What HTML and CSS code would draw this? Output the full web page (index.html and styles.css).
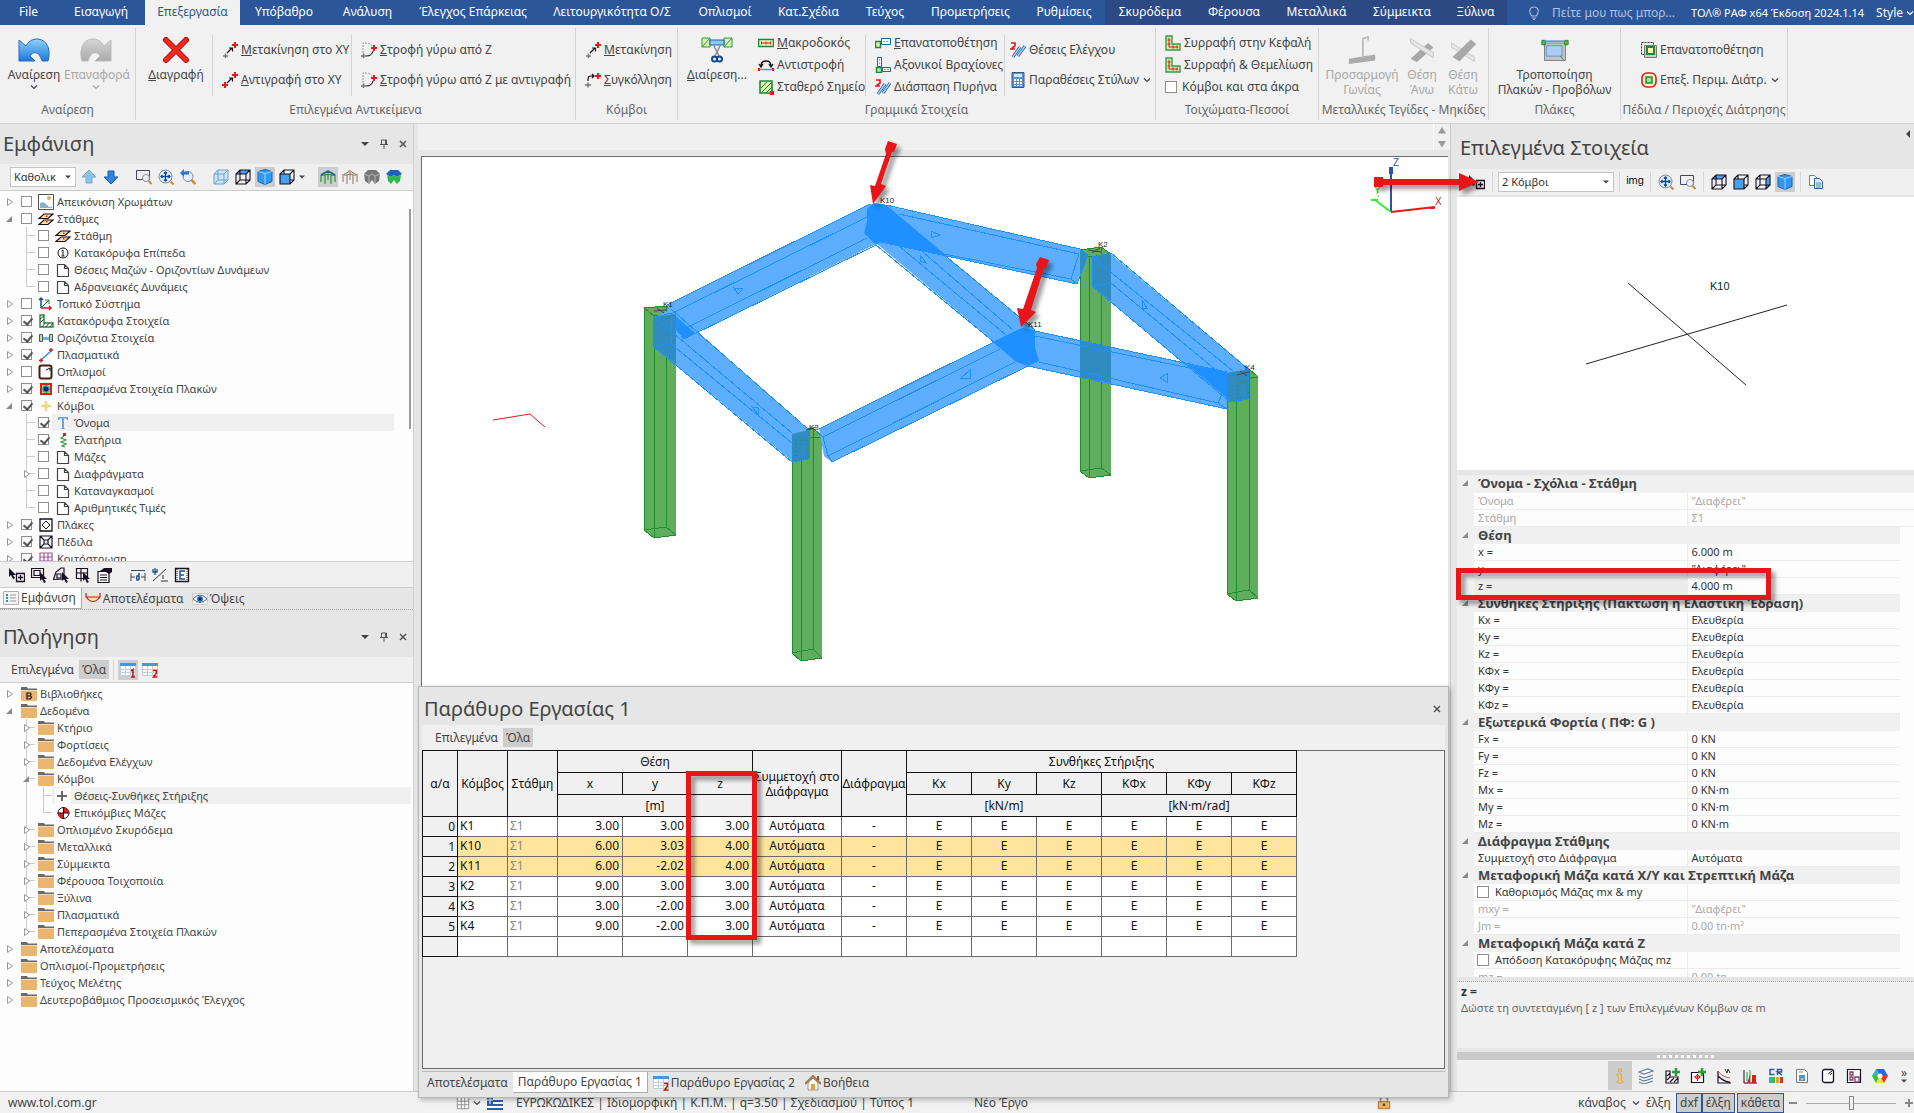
FILE: index.html
```html
<!DOCTYPE html>
<html lang="el">
<head>
<meta charset="utf-8">
<title>ΤΟΛ® ΡΑΦ x64</title>
<link rel="stylesheet" href="styles.css">
</head>
<body>
<svg class="defs" aria-hidden="true">
  <defs>
    <linearGradient id="gb" x1="0" y1="0" x2="0" y2="1"><stop offset="0" stop-color="#8fd0ff"/><stop offset="1" stop-color="#1c7ad8"/></linearGradient>
    <linearGradient id="gg" x1="0" y1="0" x2="0" y2="1"><stop offset="0" stop-color="#d6d6d6"/><stop offset="1" stop-color="#aaa"/></linearGradient>
  </defs>
  <symbol id="undo" viewBox="0 0 32 26"><path d="M1 3v21h16l-5-5c3-5 9-5 12 5h6c3-10 0-21-10-22-6 0-9 2-12 7z" fill="url(#gb)" stroke="#2a6db5"/></symbol>
  <symbol id="redo" viewBox="0 0 32 26"><path d="M31 3v21H15l5-5c-3-5-9-5-12 5H2C-1 14 2 3 12 2c6 0 9 2 12 7z" fill="url(#gg)" stroke="#bbb"/></symbol>
  <symbol id="del" viewBox="0 0 28 28"><path d="M4 4l20 20M24 4L4 24" stroke="#a31510" stroke-width="6" stroke-linecap="round"/><path d="M4 4l20 20M24 4L4 24" stroke="#ee2a1e" stroke-width="4" stroke-linecap="round"/></symbol>
  <symbol id="move" viewBox="0 0 16 16"><path d="M10 3h6M13 0v6" stroke="#e21a1a" stroke-width="2"/><path d="M1 14h5M3.500 11.500v5" stroke="#777" stroke-width="1.500"/><path d="M5 11l5-5M7 6h3.500v3.500" stroke="#201018" fill="none" stroke-width="1.200"/></symbol>
  <symbol id="copyxy" viewBox="0 0 16 16"><path d="M10 3h6M13 0v6M0 13h6M3 10v6" stroke="#e21a1a" stroke-width="2"/><path d="M5 11l5-5M7 6h3.500v3.500" stroke="#201018" fill="none" stroke-width="1.200"/></symbol>
  <symbol id="rot" viewBox="0 0 16 16"><path d="M2 11V1h4q5 1 6 5" stroke="#999" stroke-dasharray="2 1" fill="none"/><path d="M10 6h6M13 3v6" stroke="#e21a1a" stroke-width="2"/><path d="M0 14h5M2.500 11.500v5" stroke="#777" stroke-width="1.500"/><path d="M5 14q6 0 7-5" stroke="#201018" stroke-width="1.200" fill="none"/></symbol>
  <symbol id="glue" viewBox="0 0 16 16"><path d="M10 4h6M13 1v6" stroke="#e21a1a" stroke-width="2"/><path d="M0 13h6M3 10.500v5" stroke="#777" stroke-width="1.500"/><path d="M3 9V7q0-3 3-3h3M7 2l2 2-2 2" stroke="#201018" fill="none" stroke-width="1.200"/></symbol>
  <symbol id="cut" viewBox="0 0 32 26"><path d="M1 1h8v9H1zM23 1h8v9h-8z" fill="#d8f0b0" stroke="#2f9a3c"/><path d="M9 3h14v5H9z" fill="#8cc8f0" stroke="#1c62a8"/><path d="M1 10l8-9M23 10l8-9" stroke="#2f9a3c"/><path d="M13 9l5 10M19 9l-5 10" stroke="#888" stroke-width="1.500"/><circle cx="13.500" cy="22" r="2.500" fill="none" stroke="#15498c" stroke-width="2"/><circle cx="18.500" cy="22" r="2.500" fill="none" stroke="#15498c" stroke-width="2"/></symbol>
  <symbol id="macro" viewBox="0 0 16 16"><path d="M.5 4.500h15v7H.5z" fill="#e4f6c8" stroke="#1f8a35" stroke-width="1.600"/><path d="M3 8h10" stroke="#e21a1a"/><path d="M3 6.500h1v3H3zM7.500 6.500h1v3h-1zM12 6.500h1v3h-1z" fill="#e21a1a"/></symbol>
  <symbol id="inv" viewBox="0 0 16 16"><path d="M3 9q0-5 5-5t5 5M1 7l2 3 2-3M11 7l2 3 2-3" stroke="#201018" fill="none" stroke-width="1.300"/><path d="M2 12.500h12" stroke="#3aa0ff" stroke-width="1.500"/><path d="M0 11h2v3H0zM14 11h2v3h-2z" fill="#e21a1a"/></symbol>
  <symbol id="fixp" viewBox="0 0 16 16"><path d="M2 2h12v12H2z" fill="#d8f0b0" stroke="#1f8a35" stroke-width="1.600"/><path d="M3 9l6-6M3 14L14 3M8 14l6-6" stroke="#1f8a35"/><path d="M12 12h4v4h-4z" fill="#e21a1a"/></symbol>
  <symbol id="repos" viewBox="0 0 16 16"><path d="M.5 6.500h5v6h-5z" fill="#d8f0b0" stroke="#1f8a35" stroke-width="1.500"/><path d="M6.500 3.500h9v6h-9z" fill="#fff" stroke="#1c62a8"/><path d="M8 6.500h6" stroke="#d88" stroke-dasharray="2 1"/></symbol>
  <symbol id="axis" viewBox="0 0 16 16"><path d="M2.500.5h4v9h-4z" fill="#fff" stroke="#1c62a8"/><path d="M7.500 10.500h8v4h-8z" fill="#fff" stroke="#1c62a8"/><path d="M1.500 10.500h5v5h-5z" fill="#b8e8a0" stroke="#1f8a35" stroke-width="1.500"/><path d="M4.500 2v6M9 12.500h6" stroke="#d88" stroke-dasharray="2 1"/></symbol>
  <symbol id="split" viewBox="0 0 16 16"><path d="M1 1h4v3L1 7h4" fill="none" stroke="#e21a1a" stroke-width="1.600"/><path d="M3 15L10 5M8 14l7-10" stroke="#1c4f90" stroke-width="3"/><path d="M3 15L10 5M8 14l7-10" stroke="#9fd4f8" stroke-width="1.500"/></symbol>
  <symbol id="calc" viewBox="0 0 16 16"><path d="M2 .5h12v15H2z" fill="#5a92d0" stroke="#3a587c"/><path d="M4 2h8v3H4z" fill="#d4ecff"/><path d="M4 7h2v2H4zM7 7h2v2H7zM10 7h2v2h-2zM4 10h2v2H4zM7 10h2v2H7zM10 10h2v2h-2zM4 13h2v1H4zM7 13h2v1H7zM10 13h2v1h-2z" fill="#fff"/></symbol>
  <symbol id="wall" viewBox="0 0 16 16"><path d="M1 1h6v8h8v6H1z" fill="#c8ecb0" stroke="#3a9a44" stroke-width="1.400"/><path d="M4 3v9h9M2.500 5h3M2.500 9h3M8 10.500v3M12 10.500v3" fill="none" stroke="#e21a1a"/></symbol>
  <symbol id="steel1" viewBox="0 0 32 32"><path d="M1 26l30-5v7L1 32z" fill="#aaa"/><path d="M17 25V3l6-2v4" fill="none" stroke="#bbb" stroke-width="2"/></symbol>
  <symbol id="steel2" viewBox="0 0 32 32"><path d="M3 26L23 8l6 5L10 30z" fill="#a8a8a8"/><path d="M3 3l26 16v6L3 8z" fill="#e4e4e4" stroke="#c4c4c4"/></symbol>
  <symbol id="steel3" viewBox="0 0 32 32"><path d="M3 8l26 16v5L3 13z" fill="#e4e4e4" stroke="#c4c4c4"/><path d="M4 24L25 4l6 5L12 29z" fill="#a8a8a8"/></symbol>
  <symbol id="slab" viewBox="0 0 32 32"><path d="M4 8h24v20H4z" fill="#c4c4c4" stroke="#777"/><path d="M6 11h18v12H6z" fill="#a9cdf4" stroke="#5f8fc4"/><path d="M1 5h4v5H1zM27 5h4v5h-4z" fill="#5ab65a" stroke="#207a2c"/><path d="M5 6h22" stroke="#4aa0e8" stroke-width="2"/><path d="M22 23l4 4" stroke="#1f8a35"/></symbol>
  <symbol id="foot1" viewBox="0 0 16 16"><path d="M.5.5h12v12H.5z" fill="none" stroke="#333" stroke-dasharray="2 1"/><path d="M3.500 3.500h12v12h-12z" fill="#ccc" stroke="#777"/><path d="M6 5h7v7H6z" fill="#fff6b0" stroke="#1f8a35" stroke-width="2"/></symbol>
  <symbol id="foot2" viewBox="0 0 16 16"><rect x="1" y="1" width="14" height="14" rx="5" fill="#fff6c8" stroke="#e21a1a" stroke-width="1.600"/><path d="M5 5h6v6H5z" fill="#a8e098" stroke="#1f8a35" stroke-width="1.500"/></symbol>
  <symbol id="chev" viewBox="0 0 8 8"><path d="M1 2.500l3 3 3-3" fill="none" stroke="currentColor" stroke-width="1.200"/></symbol>
  <symbol id="tri" viewBox="0 0 8 8"><path d="M0 2h8L4 6z" fill="currentColor"/></symbol>
  <symbol id="tup" viewBox="0 0 8 8"><path d="M0 6.500h8L4 0z" fill="currentColor"/></symbol>
  <symbol id="tdn" viewBox="0 0 8 8"><path d="M0 1h8L4 7.500z" fill="currentColor"/></symbol>
  <symbol id="tleft" viewBox="0 0 8 8"><path d="M6 0v8L2 4z" fill="currentColor"/></symbol>
  <symbol id="pin" viewBox="0 0 10 10"><path d="M2.500 1h5v4.500h-5zM1 5.500h8M5 5.500V10M6.500 1v4.500" fill="none" stroke="#555"/></symbol>
  <symbol id="x" viewBox="0 0 10 10"><path d="M2 2l6 6M8 2L2 8" stroke="#555" stroke-width="1.500"/></symbol>
  <symbol id="exp" viewBox="0 0 10 10"><path d="M2.500 1.500v7L7.500 5z" fill="#fff" stroke="#999"/></symbol>
  <symbol id="col" viewBox="0 0 10 10"><path d="M7 2v6H1z" fill="#8a8a8a"/></symbol>
  <symbol id="up" viewBox="0 0 16 16"><path d="M8 1l7 7h-4v6H5V8H1z" fill="#8cc2ee" stroke="#7aa8d0"/></symbol>
  <symbol id="down" viewBox="0 0 16 16"><path d="M8 15l7-7h-4V2H5v6H1z" fill="#2f84dc" stroke="#1a5ca8"/></symbol>
  <symbol id="zwin" viewBox="0 0 16 16"><path d="M.5 1.500h13v9H.5z" fill="none" stroke="#446"/><circle cx="10" cy="9" r="3.500" fill="#eaf4ff" stroke="#888"/><path d="M12.500 12l3 3" stroke="#d08a3c" stroke-width="2"/></symbol>
  <symbol id="zall" viewBox="0 0 16 16"><path d="M12.500 12.500l3 3" stroke="#d08a3c" stroke-width="2"/><circle cx="7.500" cy="7.500" r="6.500" fill="#dceeff" stroke="#8a8a8a"/><path d="M7.500 3v9M3 7.500h9M6 4.500L7.500 3 9 4.500M6 10.500L7.500 12 9 10.500M4.500 6L3 7.500 4.500 9M10.500 6L12 7.500 10.500 9" fill="none" stroke="#15498c" stroke-width="1.300"/></symbol>
  <symbol id="zprev" viewBox="0 0 16 16"><circle cx="8" cy="7.500" r="5" fill="#dceeff" stroke="#8a8a8a"/><path d="M11.500 11l4 4" stroke="#d08a3c" stroke-width="2.500"/><path d="M0 4l4-4v2.500h5v3H4V8z" fill="#2f74cc"/></symbol>
  <symbol id="c0" viewBox="0 0 16 16"><path d="M1 5l4-4h10v10l-4 4H1z" fill="#cfe6f8"/><path d="M1 5l4-4h10v10l-4 4H1zM1 5h10l4-4M11 5v10M5 1v10L1 15M5 11h10" fill="none" stroke="#6aa0cc"/></symbol>
  <symbol id="c1" viewBox="0 0 16 16"><path d="M1 5l4-4h10l-4 4z" fill="#4aa0f0"/><path d="M1 5l4-4h10v10l-4 4H1zM1 5h10l4-4M11 5v10M5 1v10L1 15M5 11h10" fill="none" stroke="#181020" stroke-width="1.100"/></symbol>
  <symbol id="c2" viewBox="0 0 16 16"><path d="M1 2.500L8 .5l7 2v10l-7 3-7-3z" fill="#2f98f4" stroke="#1c62a8"/><path d="M1 2.500l7 2 7-2M8 4.500v11" fill="none" stroke="#9bd2ff"/></symbol>
  <symbol id="c3" viewBox="0 0 16 16"><path d="M1 5h10v10H1z" fill="#4aa0f0"/><path d="M1 5l4-4h10v10l-4 4H1zM1 5h10l4-4M11 5v10M5 1v4M11 11h4" fill="none" stroke="#181020" stroke-width="1.100"/></symbol>
  <symbol id="c4" viewBox="0 0 16 16"><path d="M11 5l4-4v10l-4 4z" fill="#4aa0f0"/><path d="M1 5l4-4h10v10l-4 4H1zM1 5h10l4-4M11 5v10M5 1v10L1 15M5 11h10" fill="none" stroke="#181020" stroke-width="1.100"/></symbol>
  <symbol id="fr1" viewBox="0 0 16 16"><path d="M1 6l7-4 7 4v7M1 6v7M5 6v9M8 2v9M11 6v9M1 6h4l3-1 3 1h4" fill="none" stroke="#2f9a3c" stroke-width="1.300"/><path d="M1 6l7-4 7 4" fill="none" stroke="#1c62a8" stroke-width="1.500"/></symbol>
  <symbol id="fr2" viewBox="0 0 16 16"><path d="M1 6l7-4 7 4v7M1 6v7M5 6v9M8 2v9M11 6v9M1 6h4l3-1 3 1h4" fill="none" stroke="#8a7060"/><path d="M0 5h2v2H0zM7 1h2v2H7zM14 5h2v2h-2z" fill="#e8a050"/></symbol>
  <symbol id="fr3" viewBox="0 0 16 16"><path d="M0 5l4-4h8l4 4-1 7-4 3-3-4-3 4-4-3z" fill="#777"/><path d="M0 5l5 2 3-2 3 2 5-2M5 7v8M11 7v8" fill="none" stroke="#b4b4b4"/></symbol>
  <symbol id="fr4" viewBox="0 0 16 16"><path d="M0 5l4-4h8l4 4-5 3-3-2-3 2z" fill="#1c62b8"/><path d="M1 6l4 2 3-2 3 2 4-2-1 6-3 3-3-4-3 4-3-3z" fill="#2fb84a"/></symbol>
  <symbol id="pic" viewBox="0 0 16 16"><path d="M.5.500h15v15H.5z" fill="#fff" stroke="#555"/><circle cx="11" cy="4" r="2" fill="#e8a860"/><path d="M2 9q4-2 7 2t5 1v2H2z" fill="#8ab0d0"/></symbol>
  <symbol id="lev" viewBox="0 0 16 16"><path d="M1 13.500h9l5-4.500H6zM1 7.500h9L15 3H6z" fill="#fce0a0" stroke="#181020" stroke-width="1.200"/><path d="M8 10h1.500v1.500H8zM8 4.500h1.500V6H8z" fill="#e21a1a"/></symbol>
  <symbol id="one" viewBox="0 0 16 16"><circle cx="8" cy="8" r="5" fill="#fff" stroke="#181020"/><path d="M6.500 6L8 5v6M6.500 11h3" fill="none" stroke="#181020"/></symbol>
  <symbol id="doc" viewBox="0 0 16 16"><path d="M2.500 2.500h7l4 4v8h-11zM9.500 2.500v4h4" fill="#fff" stroke="#444" stroke-width="1.200"/></symbol>
  <symbol id="loc" viewBox="0 0 16 16"><path d="M3 12V2M1 4l2-2 2 2" fill="none" stroke="#1c4f90" stroke-width="1.500"/><path d="M3 12h10M11 10l2 2-2 2" fill="none" stroke="#e21a1a" stroke-width="1.500"/><path d="M3 12l8-8M7 4h4v4" fill="none" stroke="#1f8a35"/></symbol>
  <symbol id="lwall" viewBox="0 0 16 16"><path d="M2 2h4v8h9v4H2z" fill="#fff" stroke="#1f8a35" stroke-width="1.400"/><path d="M2 6l4-3M2 10l4-4M4 14l3-4M8 14l3-4M12 14l3-4" stroke="#444"/></symbol>
  <symbol id="horz" viewBox="0 0 16 16"><path d="M4 7h8v3H4z" fill="#60b8f0"/><path d="M1.500 4.500h3v7h-3zM11.500 4.500h3v7h-3z" fill="#b8d8a0" stroke="#555"/></symbol>
  <symbol id="plas" viewBox="0 0 16 16"><path d="M3 13L13 4" stroke="#2f84dc" stroke-width="1.300"/><path d="M1 13.500h4M3 11.500v4M11 3h4M13 1v4" stroke="#e21a1a" stroke-width="1.400"/></symbol>
  <symbol id="rein" viewBox="0 0 16 16"><rect x="1.500" y="1.500" width="12" height="13" rx="2" fill="#fff" stroke="#402018" stroke-width="2"/><path d="M8 6l4-2v3" fill="none" stroke="#181020"/></symbol>
  <symbol id="fem" viewBox="0 0 16 16"><path d="M2 2h12v12H2z" fill="#e21a1a"/><path d="M4 4h8v8H4z" fill="#f8e020"/><circle cx="8" cy="8" r="4" fill="#28b8a8"/><circle cx="8" cy="8" r="2.500" fill="#102080"/></symbol>
  <symbol id="plus" viewBox="0 0 16 16"><path d="M8 3v10M3 8h10" stroke="#f2d488" stroke-width="2.500"/></symbol>
  <symbol id="tt" viewBox="0 0 16 16"><path d="M3 2h10v3h-1l-1-1.500H9V13l1.500 1h-5L7 13V3.500H5L4 5H3z" fill="#6ba4da"/></symbol>
  <symbol id="spr" viewBox="0 0 16 16"><path d="M9 4L6 6l5 2-5 2 5 2-4 2 3 1" fill="none" stroke="#2f9a3c" stroke-width="1.200"/><path d="M8 1h3v3H8z" fill="#e21a1a"/></symbol>
  <symbol id="plate" viewBox="0 0 16 16"><path d="M2 2h12v12H2z" fill="#fff" stroke="#181020" stroke-width="1.300"/><path d="M8 4l4 4-4 4-4-4z" fill="none" stroke="#181020"/></symbol>
  <symbol id="foot" viewBox="0 0 16 16"><path d="M2 2h12v12H2zM2 2l4 4M14 2l-4 4M2 14l4-4M14 14l-4-4M6 6h4v4H6z" fill="#fff" stroke="#181020" stroke-width="1.200"/></symbol>
  <symbol id="gridi" viewBox="0 0 16 16"><path d="M2 2h12v12H2zM2 6h12M2 10h12M6 2v12M10 2v12" fill="none" stroke="#9c5c98" stroke-width="1.200"/></symbol>
  <symbol id="arr" viewBox="0 0 16 16"><path d="M0 1v9l2-2 2 4 2-1-2-3h3z" fill="#181020"/><path d="M7.500 6.500h8v8h-8zM9 10.500h5M11.500 8v5" fill="none" stroke="#181020" stroke-width="1.300"/></symbol>
  <symbol id="selr" viewBox="0 0 16 16"><path d="M.5 1.500h12v9H.5zM3 3.500h6v5H3z" fill="none" stroke="#181020" stroke-width="1.200"/><path d="M9 5v9l2-2 2 4 2-1-2-3h3z" fill="#181020"/></symbol>
  <symbol id="selp" viewBox="0 0 16 16"><path d="M.5 12.500L3 5l5-4h3v11zM4 7h4v4H4z" fill="none" stroke="#181020" stroke-width="1.200"/><path d="M9 5v9l2-2 2 4 2-1-2-3h3z" fill="#181020"/></symbol>
  <symbol id="selg" viewBox="0 0 16 16"><path d="M1.500 1.500h11v10h-11zM1.500 6h11M6 1.500v13" fill="none" stroke="#181020" stroke-width="1.200"/><path d="M8 5v9l2-2 2 4 2-1-2-3h3z" fill="#181020"/></symbol>
  <symbol id="prop" viewBox="0 0 16 16"><path d="M1 4.500h11v11H1zM3 8h7M3 10.500h7M3 13h7" fill="#fff" stroke="#181020" stroke-width="1.200"/><path d="M3 4l4-3h8v4l-3 2-3-2z" fill="#181020"/></symbol>
  <symbol id="dim" viewBox="0 0 16 16"><path d="M1 3.500h14M1 6v8M15 6v8M1 10h4M11 10h4" stroke="#445" fill="none"/><path d="M9 6v7M9 9H7q-1 2 0 4h2" stroke="#1c4f90" fill="none" stroke-width="1.500"/></symbol>
  <symbol id="ang" viewBox="0 0 16 16"><path d="M1 14L14 2M9 14h7" stroke="#333"/><path d="M1 2v3h4V2M3 1v7" stroke="#1c4f90" fill="none" stroke-width="1.300"/><path d="M11 8v4" stroke="#333"/></symbol>
  <symbol id="ee" viewBox="0 0 16 16"><path d="M1.500 1.500h13v13h-13z" fill="#fff" stroke="#181020" stroke-width="1.300"/><path d="M3 2v12M13 2v12" stroke="#181020" stroke-dasharray="1 1"/><path d="M11 4H6v8h5M6 8h4" fill="none" stroke="#1c4f90" stroke-width="1.500"/></symbol>
  <symbol id="list" viewBox="0 0 16 16"><path d="M.5 1.500h15v13H.5z" fill="#f4f4f4" stroke="#b0b0b0"/><path d="M3 4h2v2H3zM3 7h2v2H3zM3 10h2v2H3z" fill="#2f84dc"/><path d="M7 5h6M7 8h6M7 11h6" stroke="#999"/></symbol>
  <symbol id="mom" viewBox="0 0 16 16"><path d="M1 6h14q-7 9-14 0z" fill="#fbe9a0"/><path d="M1 2v4h14V2M1 6q7 9 14 0" fill="none" stroke="#c81818" stroke-width="1.200"/></symbol>
  <symbol id="eye" viewBox="0 0 16 16"><path d="M.5 2.500h15v11H.5z" fill="#f4f4f4" stroke="#ccc"/><path d="M1 8q7-8 14 0-7 7-14 0z" fill="#fff" stroke="#4a6a90"/><circle cx="8" cy="8" r="3" fill="#2868b0"/><circle cx="8" cy="8" r="1.200" fill="#102040"/></symbol>
  <symbol id="cal1" viewBox="0 0 16 16"><path d="M.5 1.500h15v12H.5zM.5 7.500h15M.5 10.500h15M5.500 4v9M10.500 4v9" fill="#fff" stroke="#c4ccd4"/><path d="M0 1h16v3H0z" fill="#4a94e4"/><path d="M11 9l2-1.500V15M11 15h4" fill="none" stroke="#c01818" stroke-width="1.600"/></symbol>
  <symbol id="cal2" viewBox="0 0 16 16"><path d="M.5 1.500h15v12H.5zM.5 7.500h15M.5 10.500h15M5.500 4v9M10.500 4v9" fill="#fff" stroke="#c4ccd4"/><path d="M0 1h16v3H0z" fill="#4a94e4"/><path d="M11 8.500h3.500v2.500L11.500 15H15.500" fill="none" stroke="#c01818" stroke-width="1.600"/></symbol>
  <symbol id="fold" viewBox="0 0 16 16"><path d="M0 1h6l1 1.500h9V4H0z" fill="#6a6a6a"/><path d="M0 4.500h16V14q0 1-1 1H1q-1 0-1-1z" fill="#eab56e"/></symbol>
  <symbol id="foldb" viewBox="0 0 16 16"><path d="M0 1h6l1 1.500h9V4H0z" fill="#6a6a6a"/><path d="M0 4.500h16V14q0 1-1 1H1q-1 0-1-1z" fill="#eab56e"/><path d="M6 7h3q2 1 0 3 3 1 0 3H6zM6 10h3" fill="none" stroke="#181020" stroke-width="1.200"/></symbol>
  <symbol id="plusg" viewBox="0 0 16 16"><path d="M0 0h16v16H0z" fill="#fdfdfd"/><path d="M7 3v10M2 8h10" stroke="#666" stroke-width="2"/></symbol>
  <symbol id="mass" viewBox="0 0 16 16"><circle cx="8.500" cy="8" r="5.500" fill="#fff" stroke="#181020"/><path d="M8.500 8V2.500A5.500 5.500 0 0 1 14 8zM8.500 8v5.500A5.500 5.500 0 0 1 3 8z" fill="#e21a1a"/><path d="M8.500 2v12M2.500 8h12" stroke="#181020"/></symbol>
  <symbol id="pages" viewBox="0 0 16 16"><path d="M1.500 1.500h5l3 3v7h-8z" fill="#fff" stroke="#4a84c4"/><path d="M6.500 4.500h5l3 3v7h-8z" fill="#dcecff" stroke="#2a64a4"/><path d="M8 9h5M8 11h5M8 13h5" stroke="#4a84c4"/></symbol>
  <symbol id="house" viewBox="0 0 16 16"><path d="M3 8v7h10V8L8 3z" fill="#fff8e8" stroke="#999"/><path d="M0 9l8-8 8 8" fill="none" stroke="#a07850" stroke-width="2"/><path d="M6 9h4v6H6z" fill="#e0a050"/><path d="M12 1h2v4h-2z" fill="#b04030"/></symbol>
  <symbol id="info" viewBox="0 0 16 16"><path d="M6.500 1h3v3h-3zM5 6h4.500v7H11v2H5v-2h1.500V8H5z" fill="#f4c870" stroke="#c89040" stroke-width=".5"/></symbol>
  <symbol id="lay" viewBox="0 0 16 16"><path d="M1 4l9-3 5 2-9 3zM1 8l5 2 9-3M1 11l5 2 9-3M1 14l5 2 9-3" fill="#fff" stroke="#667a9c" stroke-width="1.200"/></symbol>
  <symbol id="b1" viewBox="0 0 16 16"><path d="M2 3h4v6h8v6H2zM3 8l3-3M3 12l3-3M6 14l4-4M10 14l4-4" fill="#fff" stroke="#181020" stroke-width="1.200"/><path d="M12 0v8M8 4h8" stroke="#2f9a3c" stroke-width="2.500"/></symbol>
  <symbol id="b2" viewBox="0 0 16 16"><path d="M1.500 4.500h12v10h-12z" fill="#fff" stroke="#181020" stroke-width="1.200"/><path d="M4 9h7M7.500 6v7" stroke="#e21a1a"/><circle cx="7.500" cy="9" r="2" fill="none" stroke="#e21a1a"/><path d="M12 0v8M8 4h8" stroke="#2f9a3c" stroke-width="2.500"/></symbol>
  <symbol id="b3" viewBox="0 0 16 16"><path d="M2 3v12h13M2 8q6 6 12 6" fill="none" stroke="#181020" stroke-width="1.200"/><path d="M2 3q4 6 12 7" fill="none" stroke="#c06040"/><path d="M9 1l2 4 1-4 2 4" fill="none" stroke="#333"/></symbol>
  <symbol id="b4" viewBox="0 0 16 16"><path d="M2 2v13h13" fill="none" stroke="#181020"/><path d="M5 15l3-8v8zM10 7h4v8h-4z" fill="#e21a1a"/><path d="M8 2v12M5 4v9" stroke="#2f9a3c"/></symbol>
  <symbol id="b5" viewBox="0 0 16 16"><path d="M6.500 1.500H2v5h4.500M9.500 7V1.500h4v2.500h-4l4.500 3" fill="none" stroke="#3a54a8" stroke-width="1.500"/><path d="M1 9h3v6H1z" fill="#38a8e0"/><path d="M4 9h3v6H4z" fill="#40b848"/><path d="M8 9h3v6H8z" fill="#f0a020"/><path d="M12 9h3v6h-3z" fill="#e03020"/></symbol>
  <symbol id="b6" viewBox="0 0 16 16"><path d="M2.500 1.500h8l3 3v10h-11z" fill="#fff" stroke="#777"/><path d="M5 7h6v6H5z" fill="#4a94e4"/><path d="M5 4h4M6 12l2-3 2 3z" stroke="#888" fill="#fff"/></symbol>
  <symbol id="b7" viewBox="0 0 16 16"><rect x="2.500" y="1.500" width="11" height="13" rx="2" fill="#fff" stroke="#181020" stroke-width="1.300"/><path d="M8 6l4-3M10 7l2-2" stroke="#181020"/></symbol>
  <symbol id="b8" viewBox="0 0 16 16"><path d="M1.500 1.500h13v13h-13z" fill="#fff" stroke="#181020" stroke-width="1.200"/><path d="M4 4h3v3H4zM4 9h3v3H4zM9 9h4v5H9z" fill="none" stroke="#804060" stroke-width="1.300"/></symbol>
  <symbol id="b9" viewBox="0 0 16 16"><path d="M4 1h8l4 7H8z" fill="#2868e0"/><path d="M0 8l4-7 4 7z" fill="#30b8c0"/><path d="M0 8h8l-4 7z" fill="#38c040"/><path d="M4 15l4-7 4 7z" fill="#f0e040"/><path d="M12 15L8 8h8z" fill="#e04020"/><circle cx="8" cy="8" r="2.500" fill="#fff"/></symbol>
  <symbol id="flag" viewBox="0 0 16 16"><path d="M0 1h16v14H0z" fill="#fff"/><path d="M0 2h16M0 6h16M0 10h16M0 14h16" stroke="#2a5ca8" stroke-width="2"/><path d="M0 1h6v8H0z" fill="#2a5ca8"/><path d="M3 1v8M0 5h6" stroke="#fff"/></symbol>
  <symbol id="tbl" viewBox="0 0 16 16"><path d="M1.500 1.500h13v13h-13zM1.500 6h13M1.500 10h13M6 1.500v13M10 1.500v13" fill="#fff" stroke="#888"/></symbol>
  <symbol id="lock" viewBox="0 0 16 16"><path d="M4 8V4q0-3 4-3t4 3v4" fill="none" stroke="#999" stroke-width="2"/><path d="M1.500 6.500h13v8h-13z" fill="#eeb060" stroke="#a06a28"/><circle cx="8" cy="10" r="1.500" fill="#604010"/></symbol>
  <symbol id="bulb" viewBox="0 0 16 16"><path d="M6 11Q3 8 4 4.500 5 2 8 2t4 2.500Q13 8 10 11zM6 13h4M7 14.500h2" fill="none" stroke="#a9b9d6" stroke-width="1.100"/></symbol>
</svg>

<header class="ribbon">
  <nav class="tabs">
    <a href="#">File</a><a href="#">Εισαγωγή</a><a href="#" class="on">Επεξεργασία</a><a href="#">Υπόβαθρο</a><a href="#">Ανάλυση</a><a href="#">Έλεγχος Επάρκειας</a><a href="#">Λειτουργικότητα Ο/Σ</a><a href="#">Οπλισμοί</a><a href="#">Κατ.Σχέδια</a><a href="#">Τεύχος</a><a href="#">Προμετρήσεις</a><a href="#">Ρυθμίσεις</a><a href="#" class="dk">Σκυρόδεμα</a><a href="#" class="dk">Φέρουσα</a><a href="#" class="dk">Μεταλλικά</a><a href="#" class="dk">Σύμμεικτα</a><a href="#" class="dk">Ξύλινα</a>
    <div class="tabs-end"><svg class="i16"><use href="#bulb"/></svg><span class="tell">Πείτε μου πως μπορ...</span><span class="ver">ΤΟΛ® ΡΑΦ x64 Έκδοση 2024.1.14</span><button class="style-btn">Style<svg class="i8"><use href="#chev"/></svg></button></div>
  </nav>
  <div class="groups">
    <section class="grp g1"><div class="body">
      <button class="big w60"><svg><use href="#undo"/></svg>Αναίρεση<svg class="i8"><use href="#chev"/></svg></button>
      <button class="big w64 off"><svg><use href="#redo"/></svg>Επαναφορά<svg class="i8"><use href="#chev"/></svg></button>
    </div><h2>Αναίρεση</h2></section>
    <section class="grp g2"><div class="body">
      <button class="big w72"><svg><use href="#del"/></svg><span><u>Δ</u>ιαγραφή</span></button><i class="vs"></i>
      <div class="stack two w138"><button><svg><use href="#move"/></svg><span><u>Μ</u>ετακίνηση στο XY</span></button><button><svg><use href="#copyxy"/></svg><span><u>Α</u>ντιγραφή στο XY</span></button></div><i class="vs"></i>
      <div class="stack two"><button><svg><use href="#rot"/></svg><span><u>Σ</u>τροφή γύρω από Ζ</span></button><button><svg><use href="#rot"/></svg><span><u>Σ</u>τροφή γύρω από Ζ με αντιγραφή</span></button></div>
    </div><h2>Επιλεγμένα Αντικείμενα</h2></section>
    <section class="grp g3"><div class="body">
      <div class="stack two"><button><svg><use href="#move"/></svg><span><u>Μ</u>ετακίνηση</span></button><button><svg><use href="#glue"/></svg><span><u>Σ</u>υγκόλληση</span></button></div>
    </div><h2>Κόμβοι</h2></section>
    <section class="grp g4"><div class="body">
      <button class="big w64"><svg><use href="#cut"/></svg><span><u>Δ</u>ιαίρεση...</span></button>
      <div class="stack w116"><button><svg><use href="#macro"/></svg><span><u>Μ</u>ακροδοκός</span></button><button><svg><use href="#inv"/></svg><span>Αντιστροφή</span></button><button><svg><use href="#fixp"/></svg><span>Σταθερό Σημείο</span></button></div><i class="vs"></i>
      <div class="stack w138"><button><svg><use href="#repos"/></svg><span><u>Ε</u>πανατοποθέτηση</span></button><button><svg><use href="#axis"/></svg><span>Αξονικοί Βραχίονες</span></button><button><svg><use href="#split"/></svg><span>Διάσπαση Πυρήνα</span></button></div><i class="vs"></i>
      <div class="stack two near"><button><svg><use href="#split"/></svg><span>Θέσεις Ελέγχου</span></button><button><svg><use href="#calc"/></svg><span>Παραθέσεις Στύλων</span><svg class="i8"><use href="#chev"/></svg></button></div>
    </div><h2>Γραμμικά Στοιχεία</h2></section>
    <section class="grp g5"><div class="body">
      <div class="stack"><button><svg><use href="#wall"/></svg><span>Συρραφή στην Κεφαλή</span></button><button><svg><use href="#wall"/></svg><span>Συρραφή &amp; Θεμελίωση</span></button><label><input type="checkbox">Κόμβοι και στα άκρα</label></div>
    </div><h2>Τοιχώματα-Πεσσοί</h2></section>
    <section class="grp g6"><div class="body">
      <button class="big w84 off"><svg><use href="#steel1"/></svg>Προσαρμογή<br>Γωνίας</button>
      <button class="big w36 off"><svg><use href="#steel2"/></svg>Θέση<br>Άνω</button>
      <button class="big w46 off"><svg><use href="#steel3"/></svg>Θέση<br>Κάτω</button>
    </div><h2>Μεταλλικές Τεγίδες - Μηκίδες</h2></section>
    <section class="grp g7"><div class="body">
      <button class="big wide"><svg><use href="#slab"/></svg>Τροποποίηση<br>Πλακών - Προβόλων</button>
    </div><h2>Πλάκες</h2></section>
    <section class="grp g8"><div class="body">
      <div class="stack two"><button><svg><use href="#foot1"/></svg><span>Επανατοποθέτηση</span></button><button><svg><use href="#foot2"/></svg><span>Επεξ. Περιμ. Διάτρ.</span><svg class="i8"><use href="#chev"/></svg></button></div>
    </div><h2>Πέδιλα / Περιοχές Διάτρησης</h2></section>
  </div>
</header>

<main class="work">
  <aside class="left">
    <section class="pane show">
      <header class="cap"><h1>Εμφάνιση</h1><button><svg class="i8"><use href="#tri"/></svg></button><button><svg class="i10"><use href="#pin"/></svg></button><button><svg class="i10"><use href="#x"/></svg></button></header>
      <div class="bar">
        <span class="sel-box s66"><select aria-label="Προβολή"><option>Καθολικ</option></select><svg class="i6"><use href="#tri"/></svg></span>
        <button><svg><use href="#up"/></svg></button><button><svg><use href="#down"/></svg></button>
        <button class="gap"><svg><use href="#zwin"/></svg></button><button><svg><use href="#zall"/></svg></button><button><svg><use href="#zprev"/></svg></button>
        <button class="gap"><svg><use href="#c0"/></svg></button><button><svg><use href="#c1"/></svg></button><button class="act"><svg><use href="#c2"/></svg></button><button><svg><use href="#c3"/></svg></button><svg class="i6"><use href="#tri"/></svg>
        <button class="gap act"><svg><use href="#fr1"/></svg></button><button><svg><use href="#fr2"/></svg></button><button><svg><use href="#fr3"/></svg></button><button><svg><use href="#fr4"/></svg></button>
      </div>
      <div class="treebox">
      <ul class="tree">
        <li><svg class="e"><use href="#exp"/></svg><label><input type="checkbox"><svg><use href="#pic"/></svg>Απεικόνιση Χρωμάτων</label></li>
        <li><svg class="e"><use href="#col"/></svg><label><input type="checkbox"><svg><use href="#lev"/></svg>Στάθμες</label></li>
        <li class="l2"><i class="e"></i><label><input type="checkbox"><svg><use href="#lev"/></svg>Στάθμη</label></li>
        <li class="l2"><i class="e"></i><label><input type="checkbox"><svg><use href="#one"/></svg>Κατακόρυφα Επίπεδα</label></li>
        <li class="l2"><i class="e"></i><label><input type="checkbox"><svg><use href="#doc"/></svg>Θέσεις Μαζών - Οριζοντίων Δυνάμεων</label></li>
        <li class="l2 end"><i class="e"></i><label><input type="checkbox"><svg><use href="#doc"/></svg>Αδρανειακές Δυνάμεις</label></li>
        <li><svg class="e"><use href="#exp"/></svg><label><input type="checkbox"><svg><use href="#loc"/></svg>Τοπικό Σύστημα</label></li>
        <li><svg class="e"><use href="#exp"/></svg><label><input type="checkbox" checked><svg><use href="#lwall"/></svg>Κατακόρυφα Στοιχεία</label></li>
        <li><svg class="e"><use href="#exp"/></svg><label><input type="checkbox" checked><svg><use href="#horz"/></svg>Οριζόντια Στοιχεία</label></li>
        <li><svg class="e"><use href="#exp"/></svg><label><input type="checkbox" checked><svg><use href="#plas"/></svg>Πλασματικά</label></li>
        <li><svg class="e"><use href="#exp"/></svg><label><input type="checkbox"><svg><use href="#rein"/></svg>Οπλισμοί</label></li>
        <li><svg class="e"><use href="#exp"/></svg><label><input type="checkbox" checked><svg><use href="#fem"/></svg>Πεπερασμένα Στοιχεία Πλακών</label></li>
        <li><svg class="e"><use href="#col"/></svg><label><input type="checkbox" checked><svg><use href="#plus"/></svg>Κόμβοι</label></li>
        <li class="l2 hl"><i class="e"></i><label><input type="checkbox" checked><svg><use href="#tt"/></svg>Όνομα</label></li>
        <li class="l2"><i class="e"></i><label><input type="checkbox" checked><svg><use href="#spr"/></svg>Ελατήρια</label></li>
        <li class="l2"><i class="e"></i><label><input type="checkbox"><svg><use href="#doc"/></svg>Μάζες</label></li>
        <li class="l2"><svg class="e"><use href="#exp"/></svg><label><input type="checkbox"><svg><use href="#doc"/></svg>Διαφράγματα</label></li>
        <li class="l2"><i class="e"></i><label><input type="checkbox"><svg><use href="#doc"/></svg>Καταναγκασμοί</label></li>
        <li class="l2 end"><i class="e"></i><label><input type="checkbox"><svg><use href="#doc"/></svg>Αριθμητικές Τιμές</label></li>
        <li><svg class="e"><use href="#exp"/></svg><label><input type="checkbox" checked><svg><use href="#plate"/></svg>Πλάκες</label></li>
        <li><svg class="e"><use href="#exp"/></svg><label><input type="checkbox" checked><svg><use href="#foot"/></svg>Πέδιλα</label></li>
        <li><svg class="e"><use href="#exp"/></svg><label><input type="checkbox" checked><svg><use href="#gridi"/></svg>Κοιτόστρωση</label></li>
      </ul>
      <i class="thumb"></i>
      </div>
      <div class="bar low"><button><svg><use href="#arr"/></svg></button><button><svg><use href="#selr"/></svg></button><button><svg><use href="#selp"/></svg></button><button><svg><use href="#selg"/></svg></button><button><svg><use href="#prop"/></svg></button><button class="gap"><svg><use href="#dim"/></svg></button><button><svg><use href="#ang"/></svg></button><button><svg><use href="#ee"/></svg></button></div>
      <nav class="ptabs"><a href="#" class="on"><svg><use href="#list"/></svg>Εμφάνιση</a><a href="#"><svg><use href="#mom"/></svg>Αποτελέσματα</a><a href="#"><svg><use href="#eye"/></svg>Όψεις</a></nav>
    </section>
    <section class="pane nav">
      <header class="cap"><h1>Πλοήγηση</h1><button><svg class="i8"><use href="#tri"/></svg></button><button><svg class="i10"><use href="#pin"/></svg></button><button><svg class="i10"><use href="#x"/></svg></button></header>
      <div class="bar txt"><button class="t">Επιλεγμένα</button><button class="t act">Όλα</button><i class="vs"></i><button class="act"><svg><use href="#cal1"/></svg></button><button><svg><use href="#cal2"/></svg></button></div>
      <ul class="tree grow">
        <li><svg class="e"><use href="#exp"/></svg><a href="#"><svg><use href="#foldb"/></svg>Βιβλιοθήκες</a></li>
        <li><svg class="e"><use href="#col"/></svg><a href="#"><svg><use href="#fold"/></svg>Δεδομένα</a></li>
        <li class="l2"><svg class="e"><use href="#exp"/></svg><a href="#"><svg><use href="#fold"/></svg>Κτήριο</a></li>
        <li class="l2"><svg class="e"><use href="#exp"/></svg><a href="#"><svg><use href="#fold"/></svg>Φορτίσεις</a></li>
        <li class="l2"><svg class="e"><use href="#exp"/></svg><a href="#"><svg><use href="#fold"/></svg>Δεδομένα Ελέγχων</a></li>
        <li class="l2"><svg class="e"><use href="#col"/></svg><a href="#"><svg><use href="#fold"/></svg>Κόμβοι</a></li>
        <li class="l3 hl"><i class="e"></i><a href="#"><svg><use href="#plusg"/></svg>Θέσεις-Συνθήκες Στήριξης</a></li>
        <li class="l3 end"><i class="e"></i><a href="#"><svg><use href="#mass"/></svg>Επικόμβιες Μάζες</a></li>
        <li class="l2"><svg class="e"><use href="#exp"/></svg><a href="#"><svg><use href="#fold"/></svg>Οπλισμένο Σκυρόδεμα</a></li>
        <li class="l2"><svg class="e"><use href="#exp"/></svg><a href="#"><svg><use href="#fold"/></svg>Μεταλλικά</a></li>
        <li class="l2"><svg class="e"><use href="#exp"/></svg><a href="#"><svg><use href="#fold"/></svg>Σύμμεικτα</a></li>
        <li class="l2"><svg class="e"><use href="#exp"/></svg><a href="#"><svg><use href="#fold"/></svg>Φέρουσα Τοιχοποιία</a></li>
        <li class="l2"><svg class="e"><use href="#exp"/></svg><a href="#"><svg><use href="#fold"/></svg>Ξύλινα</a></li>
        <li class="l2"><svg class="e"><use href="#exp"/></svg><a href="#"><svg><use href="#fold"/></svg>Πλασματικά</a></li>
        <li class="l2 end"><svg class="e"><use href="#exp"/></svg><a href="#"><svg><use href="#fold"/></svg>Πεπερασμένα Στοιχεία Πλακών</a></li>
        <li><svg class="e"><use href="#exp"/></svg><a href="#"><svg><use href="#fold"/></svg>Αποτελέσματα</a></li>
        <li><svg class="e"><use href="#exp"/></svg><a href="#"><svg><use href="#fold"/></svg>Οπλισμοί-Προμετρήσεις</a></li>
        <li><svg class="e"><use href="#exp"/></svg><a href="#"><svg><use href="#fold"/></svg>Τεύχος Μελέτης</a></li>
        <li><svg class="e"><use href="#exp"/></svg><a href="#"><svg><use href="#fold"/></svg>Δευτεροβάθμιος Προσεισμικός Έλεγχος</a></li>
      </ul>
    </section>
  </aside>

  <section class="center">
    <div class="strip"><span class="spin"><svg class="i8"><use href="#tup"/></svg><svg class="i8"><use href="#tdn"/></svg></span></div>
    <div class="view">
      <svg class="scene" viewBox="422 157 1026 934" preserveAspectRatio="xMidYMin meet">
        <g fill="#5eae5e">
          <path d="M644 308l22-2 10 8v221l-22 3-10-8z"/>
          <path d="M792 431l21-3 9 9v221l-21 3-9-8z"/>
          <path d="M1080 250l21-3 10 7v221l-22 3-9-7z"/>
          <path d="M1227 372l22-3 9 8v221l-22 3-9-7z"/>
        </g>
        <g fill="none" stroke="#1f8f2d" shape-rendering="crispEdges">
          <path d="M644 530V308l22-2 10 8M644 308l10 8 22-2M654 316v222M666 306v221l10 8-22 3-10-8 22-3"/>
          <path d="M792 653V431l21-3 9 9M792 431l9 8 21-2M801 439v222M813 428v221l9 9-21 3-9-8 21-4"/>
          <path d="M1080 471V250l21-3 10 7M1080 250l9 7 22-3M1089 257v221M1101 247v221l10 7-22 3-9-7 21-3"/>
          <path d="M1227 594V372l22-3 9 8M1227 372l9 8 22-3M1236 380v221M1249 369v221l9 8-22 3-9-7 22-4"/>
        </g>
        <g fill="#5eaeff">
          <path d="M667 305L870 204 884 205 880 242 684 339 673 329z"/>
          <path d="M653 318L671 309 809 430V459L792 461 653 346z"/>
          <path d="M819 429L1020 329 1035 330 1039 361 1028 366 832 462 824 456z"/>
          <path d="M884 205L1080 249 1088 255 1077 284 881 242z"/>
          <path d="M864 233L876 204H884L1035 330V348L1017 361z"/>
          <path d="M1035 331L1227 372V409L1028 366z"/>
          <path d="M1092 257L1111 254 1248 369 1230 402 1092 286z"/>
        </g>
        <g fill="#1e90ff">
          <path d="M867 209l7-6 12 2 61 51-66-14-5 3-12-12 3-11z"/>
          <path d="M993 342l29-14 13 2v18l4 13-11 5-13-5z"/>
          <path d="M1186 364l41 8v26zM672 313l23 20-11 6-12-14z"/>
        </g>
        <g fill="#308bc0">
          <path d="M653 317l23-3v50l-23-18zM792 434l17-4v29l-17 3zM1080 341l31 6v36l-31-6zM1092 257l19-3v47l-19-15zM1227 373l22-4v30l-19 3-3-4zM1080 250l8 5-8 22z"/>
        </g>
        <g fill="none" stroke="#1e90ff" shape-rendering="crispEdges">
          <path d="M667 305L870 204M684 339L876 245M673 313L867 217M688 327L867 238M695 333l-11 6-9-12"/>
          <path d="M671 309L809 430v29l-17 3-139-116v-28l18-5M654 317L792 433M671 344L792 443M671 313v31l-18 2"/>
          <path d="M819 429L1020 329M832 462L1028 366M823 437L1000 349M828 456L1015 362M817 431l6 6 5 19 4 6"/>
          <path d="M886 205L1080 249l8 6-11 29-196-42M899 214L1079 254l-8 25-137-27M1071 279l6 5"/>
          <path d="M876 245L1017 361M884 205L1035 330M899 246L1006 335M916 246L1013 330"/>
          <path d="M1035 331L1227 372M1028 366L1227 409M1035 336L1228 376M1039 362L1218 403l4-9M1218 403l9 6"/>
          <path d="M1092 257l19-4L1248 369v30l-18 3L1092 286zM1092 257L1233 371M1111 283L1217 371M1111 283l-19 3"/>
          <path d="M734 288l9 1-5 5zM931 231v7l9-3zM920 255l6 8-6-2zM752 407l6 1v6zM961 378l9-8v8zM1160 378l7-4v8zM1142 300l5 8h-5z"/>
        </g>
        <path d="M796 440h12v18h-12zM1238 382h10v16h-10z" fill="none" stroke="#1f8f2d" stroke-dasharray="1 3"/>
        <path d="M654 311l12-1M657 308l7 5M806 430l10-3M1088 250l13 2M1092 253l8-5M1237 375l12-3M1240 371l7 5" stroke="#444" fill="none"/>
        <path d="M493 420l37-6 15 13" stroke="#e81818" fill="none"/>
        <g fill="none" stroke-width="2"><path d="M1391 212V170" stroke="#2a55a4"/><path d="M1391 167v7" stroke="#2a55a4" stroke-width="4"/><path d="M1391 212l-16-12M1371 200h7" stroke="#30f030"/><path d="M1378 197v-9" stroke="#30f030" stroke-width="1" stroke-dasharray="2 2"/><path d="M1391 212l44-5M1430 208h5" stroke="#e81818"/></g>
        <g class="klab"><text x="663" y="307">K1</text><text x="880" y="203">K10</text><text x="809" y="430">K3</text><text x="1098" y="247">K2</text><text x="1028" y="327">K11</text><text x="1245" y="370">K4</text></g>
        <g class="alab"><text x="1393" y="166" fill="#2a55a4">Z</text><text x="1374" y="194" fill="#30c030">Y</text><text x="1435" y="205" fill="#c02020">X</text></g>
      </svg>
    </div>

    <section class="win">
      <header class="cap"><h1>Παράθυρο Εργασίας 1</h1><button><svg class="i10"><use href="#x"/></svg></button></header>
      <div class="bar txt"><button class="t">Επιλεγμένα</button><button class="t act">Όλα</button></div>
      <div class="sheet">
        <table>
          <colgroup><col class="c35"><col class="c50"><col class="c50"><col class="c65"><col class="c65"><col class="c65"><col class="c89"><col class="c65"><col class="c65"><col class="c65"><col class="c65"><col class="c65"><col class="c65"><col class="c65"></colgroup>
          <thead>
            <tr><th rowspan="3">α/α</th><th rowspan="3">Κόμβος</th><th rowspan="3">Στάθμη</th><th colspan="3">Θέση</th><th rowspan="3">Συμμετοχή στο Διάφραγμα</th><th rowspan="3">Διάφραγμα</th><th colspan="6">Συνθήκες Στήριξης</th></tr>
            <tr><th>x</th><th>y</th><th>z</th><th>Kx</th><th>Ky</th><th>Kz</th><th>KΦx</th><th>KΦy</th><th>KΦz</th></tr>
            <tr><th colspan="3">[m]</th><th colspan="3">[kN/m]</th><th colspan="3">[kN·m/rad]</th></tr>
          </thead>
          <tbody>
            <tr><th>0</th><td class="l">K1</td><td class="l g">Σ1</td><td class="r">3.00</td><td class="r">3.00</td><td class="r">3.00</td><td>Αυτόματα</td><td>-</td><td>E</td><td>E</td><td>E</td><td>E</td><td>E</td><td>E</td></tr>
            <tr class="y"><th>1</th><td class="l">K10</td><td class="l g">Σ1</td><td class="r">6.00</td><td class="r">3.03</td><td class="r">4.00</td><td>Αυτόματα</td><td>-</td><td>E</td><td>E</td><td>E</td><td>E</td><td>E</td><td>E</td></tr>
            <tr class="y"><th>2</th><td class="l">K11</td><td class="l g">Σ1</td><td class="r">6.00</td><td class="r">-2.02</td><td class="r">4.00</td><td>Αυτόματα</td><td>-</td><td>E</td><td>E</td><td>E</td><td>E</td><td>E</td><td>E</td></tr>
            <tr><th>3</th><td class="l">K2</td><td class="l g">Σ1</td><td class="r">9.00</td><td class="r">3.00</td><td class="r">3.00</td><td>Αυτόματα</td><td>-</td><td>E</td><td>E</td><td>E</td><td>E</td><td>E</td><td>E</td></tr>
            <tr><th>4</th><td class="l">K3</td><td class="l g">Σ1</td><td class="r">3.00</td><td class="r">-2.00</td><td class="r">3.00</td><td>Αυτόματα</td><td>-</td><td>E</td><td>E</td><td>E</td><td>E</td><td>E</td><td>E</td></tr>
            <tr><th>5</th><td class="l">K4</td><td class="l g">Σ1</td><td class="r">9.00</td><td class="r">-2.00</td><td class="r">3.00</td><td>Αυτόματα</td><td>-</td><td>E</td><td>E</td><td>E</td><td>E</td><td>E</td><td>E</td></tr>
            <tr><th></th><td></td><td></td><td></td><td></td><td></td><td></td><td></td><td></td><td></td><td></td><td></td><td></td><td></td></tr>
          </tbody>
        </table>
      </div>
      <nav class="ptabs"><a href="#">Αποτελέσματα</a><a href="#" class="on">Παράθυρο Εργασίας 1</a><a href="#"><svg><use href="#cal2"/></svg>Παράθυρο Εργασίας 2</a><a href="#"><svg><use href="#house"/></svg>Βοήθεια</a></nav>
    </section>
  </section>

  <aside class="right">
    <header class="cap"><h1>Επιλεγμένα Στοιχεία</h1><button><svg class="i8"><use href="#tleft"/></svg></button></header>
    <div class="bar">
      <button><svg><use href="#arr"/></svg></button><i class="vs"></i>
      <span class="sel-box s116"><select aria-label="Επιλογή"><option>2 Κόμβοι</option></select><svg class="i6"><use href="#tri"/></svg></span><i class="vs"></i>
      <button class="img">img</button><i class="vs"></i>
      <button><svg><use href="#zall"/></svg></button><button><svg><use href="#zwin"/></svg></button><i class="vs"></i>
      <button><svg><use href="#c1"/></svg></button><button><svg><use href="#c3"/></svg></button><button><svg><use href="#c4"/></svg></button><button class="act"><svg><use href="#c2"/></svg></button><i class="vs"></i>
      <button><svg><use href="#pages"/></svg></button>
    </div>
    <div class="preview"><svg viewBox="1457 197 457 273"><path d="M1628 283l118 102M1586 364l201-59" stroke="#222" fill="none"/><text x="1710" y="290">K10</text></svg></div>
    <div class="props">
      <table class="full">
        <colgroup><col class="k17"><col class="k213"><col></colgroup>
        <tr class="h"><td><svg class="e"><use href="#col"/></svg></td><th colspan="2">Όνομα - Σχόλια - Στάθμη</th></tr>
        <tr class="d"><td></td><td>Όνομα</td><td>"Διαφέρει"</td></tr>
        <tr class="d"><td></td><td>Στάθμη</td><td>Σ1</td></tr>
      </table>
      <table>
        <colgroup><col class="k17"><col class="k213"><col></colgroup>
        <tr class="h"><td><svg class="e"><use href="#col"/></svg></td><th colspan="2">Θέση</th></tr>
        <tr><td></td><td>x =</td><td>6.000 m</td></tr>
        <tr><td></td><td>y =</td><td>"Διαφέρει"</td></tr>
        <tr class="cur"><td></td><td>z =</td><td>4.000 m</td></tr>
        <tr class="h"><td><svg class="e"><use href="#col"/></svg></td><th colspan="2">Συνθήκες Στήριξης (Πάκτωση ή Ελαστική Έδραση)</th></tr>
        <tr><td></td><td>Kx =</td><td>Ελευθερία</td></tr>
        <tr><td></td><td>Ky =</td><td>Ελευθερία</td></tr>
        <tr><td></td><td>Kz =</td><td>Ελευθερία</td></tr>
        <tr><td></td><td>KΦx =</td><td>Ελευθερία</td></tr>
        <tr><td></td><td>KΦy =</td><td>Ελευθερία</td></tr>
        <tr><td></td><td>KΦz =</td><td>Ελευθερία</td></tr>
        <tr class="h"><td><svg class="e"><use href="#col"/></svg></td><th colspan="2">Εξωτερικά Φορτία ( ΠΦ: G )</th></tr>
        <tr><td></td><td>Fx =</td><td>0 KN</td></tr>
        <tr><td></td><td>Fy =</td><td>0 KN</td></tr>
        <tr><td></td><td>Fz =</td><td>0 KN</td></tr>
        <tr><td></td><td>Mx =</td><td>0 KN·m</td></tr>
        <tr><td></td><td>My =</td><td>0 KN·m</td></tr>
        <tr><td></td><td>Mz =</td><td>0 KN·m</td></tr>
        <tr class="h"><td><svg class="e"><use href="#col"/></svg></td><th colspan="2">Διάφραγμα Στάθμης</th></tr>
        <tr><td></td><td>Συμμετοχή στο Διάφραγμα</td><td>Αυτόματα</td></tr>
        <tr class="h"><td><svg class="e"><use href="#col"/></svg></td><th colspan="2">Μεταφορική Μάζα κατά X/Y και Στρεπτική Μάζα</th></tr>
        <tr><td></td><td><label><input type="checkbox">Καθορισμός Μάζας mx &amp; my</label></td><td></td></tr>
        <tr class="d"><td></td><td>mxy =</td><td>"Διαφέρει"</td></tr>
        <tr class="d"><td></td><td>Jm =</td><td>0.00 tn·m²</td></tr>
        <tr class="h"><td><svg class="e"><use href="#col"/></svg></td><th colspan="2">Μεταφορική Μάζα κατά Z</th></tr>
        <tr><td></td><td><label><input type="checkbox">Απόδοση Κατακόρυφης Μάζας mz</label></td><td></td></tr>
        <tr class="d"><td></td><td>mz =</td><td>0.00 tn</td></tr>
      </table>
    </div>
    <div class="hint"><b>z =</b><p>Δώστε τη συντεταγμένη [ z ] των Επιλεγμένων Κόμβων σε m</p></div>
    <div class="grip"><i></i></div>
    <div class="bar icons"><button class="act"><svg><use href="#info"/></svg></button><button><svg><use href="#lay"/></svg></button><button><svg><use href="#b1"/></svg></button><button><svg><use href="#b2"/></svg></button><button><svg><use href="#b3"/></svg></button><button><svg><use href="#b4"/></svg></button><button><svg><use href="#b5"/></svg></button><button><svg><use href="#b6"/></svg></button><button><svg><use href="#b7"/></svg></button><button><svg><use href="#b8"/></svg></button><button><svg><use href="#b9"/></svg></button><button class="more">»<svg class="i6"><use href="#tri"/></svg></button></div>
  </aside>
</main>

<footer class="status">
  <span class="site">www.tol.com.gr</span>
  <span class="info"><svg class="i14"><use href="#tbl"/></svg><svg class="i8"><use href="#chev"/></svg><svg class="i16"><use href="#flag"/></svg><span class="code">ΕΥΡΩΚΩΔΙΚΕΣ | Ιδιομορφική | Κ.Π.Μ. | q=3.50 | Σχεδιασμού | Τύπος 1</span></span>
  <span class="proj">Νέο Έργο</span>
  <svg class="i14"><use href="#lock"/></svg>
  <span class="snap"><span>κάναβος</span><svg class="i8"><use href="#chev"/></svg><span>έλξη</span></span>
  <span class="tog"><button>dxf</button><button>έλξη</button><button>κάθετα</button></span>
  <span class="zoom"><svg class="i10"><path d="M1 5h8" stroke="#888" stroke-width="2"/></svg><input type="range" aria-label="Ζουμ"><svg class="i10"><path d="M1 5h8M5 1v8" stroke="#888" stroke-width="2"/></svg></span>
</footer>

<svg class="notes" viewBox="0 0 1914 1113" preserveAspectRatio="xMidYMin meet" aria-hidden="true">
  <g fill="#e81519">
    <path d="M888 141l9 3-3 8h-2l-11 32 5 2-13 18-3-19 5 1 11-32-1-5z"/>
    <path d="M1040 257l9 3-3 8h-2l-13 42 5 2-15 15-4-19 6 1 14-41-1-4z"/>
    <path d="M1374 177h9v2h76v-6l20 9-20 9v-6h-76v2h-9z"/>
  </g>
  <g fill="none" stroke="#e81519" stroke-width="5"><path d="M688.500 773.500h66v164h-66zM1458.500 570.500h310v27h-310z"/></g>
</svg>
</body>
</html>
```
FILE: styles.css
```css
* { box-sizing: border-box; }
body { margin: 0; height: 100vh; display: grid; grid-template-columns: minmax(0, 1fr); grid-template-rows: auto minmax(0, 1fr) 22px; background: #e6e6e6; color: #444; font: 12px/16px "Noto Sans", "Open Sans", sans-serif; overflow: hidden; position: relative; }
button { font: inherit; color: inherit; background: none; border: 0; padding: 0; }
a { color: inherit; text-decoration: none; }
h1, h2, ul, p { margin: 0; padding: 0; font-weight: 400; list-style: none; }
svg { flex: none; display: block; width: 16px; height: 16px; }
.defs { position: absolute; width: 0; height: 0; }
.i6 { width: 6px; height: 6px; }
.i8 { width: 8px; height: 8px; }
.i10 { width: 10px; height: 10px; }
.i14 { width: 14px; height: 14px; }
.i16 { width: 16px; height: 16px; }

/* ribbon */
.tabs { height: 25px; display: grid; grid-template-columns: 57px 88px 95px 88px 79px 132px 146px 80px 87px 66px 105px 82px 90px 78px 87px 84px 63px minmax(0, 1fr); background: #2b579a; color: #fff; line-height: 24px; text-align: center; white-space: nowrap; }
.tabs .on { background: #f1f1f1; color: #2b579a; }
.tabs .dk { background: #2b4a83; }
.tabs-end { display: flex; align-items: center; padding-left: 19px; }
.tell { color: #b4c2dc; width: 138px; padding-left: 10px; margin-right: 11px; text-align: left; }
.ver { font-size: 11px; }
.style-btn { display: flex; align-items: center; gap: 3px; margin-left: auto; }
.groups { height: 99px; display: flex; background: #f1f1f1; border-bottom: 1px solid #d2d2d2; padding-top: 3px; }
.grp { height: 92px; border-right: 1px solid #d4d4d4; display: flex; flex-direction: column; white-space: nowrap; flex: none; }
.grp h2 { font-size: 12px; line-height: 16px; color: #666; text-align: center; }
.body { height: 74px; display: flex; align-items: center; }
.g1 { width: 136px; } .g1 .body { padding-left: 4px; }
.g2 { width: 440px; } .g2 .body { padding-left: 4px; }
.g3 { width: 102px; }
.g4 { width: 478px; } .g4 .body { padding-left: 7px; }
.g5 { width: 163px; }
.g6 { width: 170px; } .g6 .body { padding-left: 1px; }
.g7 { width: 132px; }
.g8 { width: 167px; } .g8 .body { padding-left: 11px; }
.vs { width: 1px; height: 61px; background: #d4d4d4; flex: none; }
.big { align-self: flex-start; padding-top: 6px; line-height: 15px; text-align: center; flex: none; }
.big svg { width: 32px; height: 32px; margin: 0 auto 1px; padding: 2px 0; }
.big .i8 { width: 8px; height: 8px; padding: 0; margin: 1px auto; }
.off { color: #a8a8a8; }
.w36 { width: 36px; } .w46 { width: 46px; } .w60 { width: 60px; } .w64 { width: 64px; } .w72 { width: 72px; } .w84 { width: 84px; }
.w116 { width: 116px; } .w138 { width: 138px; }
.wide { width: 100%; }
.stack { display: flex; flex-direction: column; flex: none; }
.stack button, .stack label { display: flex; align-items: center; gap: 3px; height: 22px; padding-left: 9px; }
.stack.two button { height: 30px; }
.stack.near button { padding-left: 5px; }
.stack .i8 { width: 8px; height: 8px; margin-left: 1px; }
.stack label input { margin-right: 2px; }

input[type=checkbox] { appearance: none; margin: 0; width: 12px; height: 12px; flex: none; border: 1px solid #8f8f8f; background: #fff; position: relative; }
input[type=checkbox]:checked::after { content: ""; position: absolute; left: 3px; top: 0; width: 4px; height: 7px; border: solid #555; border-width: 0 2px 2px 0; transform: rotate(40deg); }

/* shared panel parts */
.work { display: grid; grid-template-columns: 414px minmax(0, 1fr) 464px; grid-template-rows: minmax(0, 1fr); min-height: 0; }
.cap { display: flex; align-items: center; gap: 9px; height: 40px; padding: 0 5px 0 3px; flex: none; }
.cap h1 { flex: 1; font-size: 20px; line-height: 28px; white-space: nowrap; }
.cap button { width: 10px; height: 10px; display: grid; place-items: center; }
.bar { display: flex; align-items: center; gap: 2px; height: 26px; background: #f0f0f0; flex: none; }
.bar button { width: 20px; height: 20px; display: grid; place-items: center; flex: none; }
.bar .act { background: #cdcdcd; }
.bar .gap { margin-left: 11px; }
.bar .vs { height: 20px; margin: 0 3px; }
.bar .t { width: auto; height: 19px; padding: 0 3px; white-space: nowrap; }
.bar.txt .vs { margin: 0 2px; }
.sel-box { display: flex; align-items: center; height: 20px; border: 1px solid #c4c4c4; background: #fff; padding-right: 4px; }
.sel-box select { appearance: none; flex: 1; min-width: 0; border: 0; background: none; padding: 0 3px; font: inherit; font-size: 11px; color: #333; }
.s66 { width: 66px; margin-right: 1px; }
.s116 { width: 116px; }

.left { display: flex; flex-direction: column; border-right: 1px solid #d0d0d0; min-height: 0; }
.pane { display: flex; flex-direction: column; }
.show { flex: none; }
.show .bar { padding-left: 10px; }
.show .low { padding-left: 7px; border-bottom: 1px solid #ccc; }
.nav { flex: 1; min-height: 0; padding-top: 7px; }
.nav .txt { height: 25px; padding-left: 8px; }
.treebox { position: relative; height: 372px; overflow: hidden; border: solid #ccc; border-width: 1px 0; background: #fdfdfd; flex: none; }
.thumb { position: absolute; right: 2px; top: 18px; width: 2px; height: 220px; background: #9c9c9c; }
.tree { --g: linear-gradient(#ccc, #ccc); font-size: 11px; line-height: 17px; padding-top: 2px; background: #fdfdfd; }
.grow { flex: 1; min-height: 0; border-top: 1px solid #ccc; }
.tree li { height: 17px; display: flex; align-items: center; gap: 6px; padding-left: 5px; white-space: nowrap; background-repeat: no-repeat; }
.tree label, .tree a { display: flex; align-items: center; gap: 3px; }
.tree label input { width: 11px; height: 11px; margin-right: 3px; }
.tree .e { width: 10px; height: 10px; }
.tree .l2 { padding-left: 22px; background-image: var(--g), var(--g); background-size: 1px 17px, 9px 1px; background-position: 26px 0, 26px 8px; }
.tree .l2.end { background-size: 1px 8px, 9px 1px; }
.tree .l3 { padding-left: 39px; background-image: var(--g), var(--g), var(--g); background-size: 1px 17px, 9px 1px, 1px 17px; background-position: 43px 0, 43px 8px, 26px 0; }
.tree .l3.end { background-size: 1px 8px, 9px 1px, 1px 17px; }
.tree .l2.hl { background-image: var(--g), var(--g), linear-gradient(#f0f0f0, #f0f0f0); background-size: 1px 17px, 9px 1px, 342px 17px; background-position: 26px 0, 26px 8px, 52px 0; }
.tree .l3.hl { background-image: var(--g), var(--g), var(--g), linear-gradient(#f0f0f0, #f0f0f0); background-size: 1px 17px, 9px 1px, 1px 17px, 359px 17px; background-position: 43px 0, 43px 8px, 26px 0, 52px 0; }
.ptabs { display: flex; height: 22px; white-space: nowrap; flex: none; }
.ptabs a { display: flex; align-items: center; gap: 2px; padding: 0 5px; }
.ptabs .on { background: #fff; border: solid #aaa; border-width: 0 1px 1px 0; }
.show .ptabs a { padding: 0 5px 0 3px; }
.show .ptabs { border-bottom: 1px dotted #aaa; }

/* drawing area */
.center { margin-left: 4px; position: relative; display: flex; flex-direction: column; min-width: 0; min-height: 0; }
.strip { height: 26px; background: #f0f0f0; display: flex; justify-content: flex-end; margin-bottom: 6px; flex: none; }
.spin { border-left: 1px solid #fff; width: 17px; display: flex; flex-direction: column; align-items: center; justify-content: center; gap: 5px; color: #9a9a9a; }
.view { flex: 1; min-height: 0; margin: 0 2px 0 3px; background: #fff; border: solid #6c6c6c; border-width: 1px 0 0 1px; }
.scene { width: 100%; height: 100%; }
.klab { font: 8px "Liberation Sans", sans-serif; fill: #222; }
.alab { font: 10px "Liberation Sans", sans-serif; }

.win { position: absolute; left: 0; right: 1px; bottom: -7px; height: 412px; z-index: 2; display: flex; flex-direction: column; padding: 0 3px; background: #e6e6e6; border: 1px solid #b4b8b4; box-shadow: 2px 2px 5px rgba(0, 0, 0, .25); }
.win .cap { height: 38px; padding: 6px 3px 0 2px; }
.win .bar { height: 25px; padding-left: 10px; }
.sheet { flex: 1; min-height: 0; background: #f0f0f0; border: 1px solid #6c6c6c; margin-bottom: 2px; }
.sheet table { table-layout: fixed; width: 875px; border-collapse: collapse; margin: -1px; color: #111; }
.c35 { width: 35px; } .c50 { width: 50px; } .c65 { width: 65px; } .c89 { width: 89px; }
.sheet th, .sheet td { padding: 0; height: 20px; line-height: 15px; font-weight: 400; text-align: center; border: 1px solid #6c6c6c; background: #fff; }
.sheet td { padding-bottom: 2px; }
.sheet th { background: #f0f0f0; border-color: #181018; }
.sheet thead th { height: 22px; }
.sheet tbody th { text-align: right; padding-right: 2px; }
.sheet .y td { background: #ffe59c; }
.sheet .l { text-align: left; padding-left: 2px; }
.sheet .r { text-align: right; padding-right: 3px; }
.sheet .g { color: #888; }
.win .ptabs { border-top: 1px solid #bbb; height: 26px; padding-bottom: 4px; }

/* selected elements */
.right { display: flex; flex-direction: column; min-height: 0; min-width: 0; border-left: 1px solid #ccc; padding-left: 6px; }
.right .cap { height: 45px; padding: 3px 1px 0 3px; }
.right .cap button { align-self: flex-start; margin-top: 2px; }
.right .bar { padding-left: 10px; }
.right .bar .img { width: 20px; height: 20px; font: 11px/16px "Liberation Sans", sans-serif; color: #111; padding-bottom: 4px; }
.preview { height: 275px; background: #fff; border: solid #e6e6e6; border-width: 2px 0 0; flex: none; }
.preview svg { width: 100%; height: 100%; }
.preview text { font: 11px "Liberation Sans", sans-serif; fill: #222; }
.props { margin-top: 5px; flex: 1; min-height: 0; overflow: hidden; background: #fdfdfd; }
.props table { border-collapse: collapse; table-layout: fixed; width: calc(100% - 14px); font-size: 11px; line-height: 16px; }
.props .full { width: 100%; }
.k17 { width: 17px; } .k213 { width: 213px; }
.props td, .props th { height: 17px; padding: 0 0 0 4px; text-align: left; white-space: nowrap; border: 0; border-bottom: 1px solid #ececec; color: #333; }
.props td:first-child { background: #f0f0f0; border-color: #f0f0f0; }
.props td:nth-child(2) { border-right: 1px solid #ececec; }
.props th { font-size: 13px; font-weight: 700; background: #f0f0f0; border-color: #f0f0f0; color: #444; }
.props .d td { color: #aaa; }
.props .cur td:nth-child(2) { background: #ececec; }
.props .e { width: 10px; height: 10px; }
.props label { display: flex; align-items: center; gap: 6px; margin-left: -1px; }
.hint { height: 67px; flex: none; background: #f0f0f0; border-top: 1px dotted #aaa; margin-top: 4px; padding: 2px 4px; font-size: 11px; color: #666; }
.hint b { font-size: 12px; color: #333; }
.grip { height: 8px; margin-top: 4px; flex: none; background: #c9c9c9; display: grid; place-items: center; }
.grip i { width: 57px; height: 3px; background: repeating-linear-gradient(90deg, #fff 0 3px, #c9c9c9 3px 6px); }
.right .icons { height: 31px; gap: 2px; justify-content: flex-end; padding: 0; }
.icons button { width: 24px; height: 29px; }
.bar.icons .more { width: 20px; align-content: center; line-height: 10px; }

/* status bar */
.status { display: grid; grid-template-columns: 456px 518px 403px 195px 104px 112px minmax(0, 1fr); align-items: center; background: #f1f1f1; border-top: 1px solid #ccc; white-space: nowrap; padding-top: 1px; }
.site { padding-left: 8px; font-size: 12px; }
.info, .snap, .tog, .zoom { display: flex; align-items: center; }
.info { gap: 3px; }
.info .i16 { margin-left: 3px; }
.code { margin-left: 10px; }
.snap { gap: 6px; padding-left: 6px; }
.tog button { height: 20px; border: 1px solid #2b579a; background: #cdcdcd; padding: 0 3px; }
.tog button:last-child { margin-left: 2px; }
.zoom { gap: 8px; }
.zoom input { appearance: none; flex: 1; min-width: 0; height: 14px; margin: 0; background: linear-gradient(#aaa, #aaa) center/100% 1px no-repeat; }
.zoom input::-webkit-slider-thumb { appearance: none; width: 5px; height: 14px; border: 1px solid #888; background: #f1f1f1; }

.notes { position: absolute; left: 0; top: 0; width: 100%; height: 100%; z-index: 5; pointer-events: none; filter: drop-shadow(4px 4px 2px rgba(0, 0, 0, .4)); }
```
